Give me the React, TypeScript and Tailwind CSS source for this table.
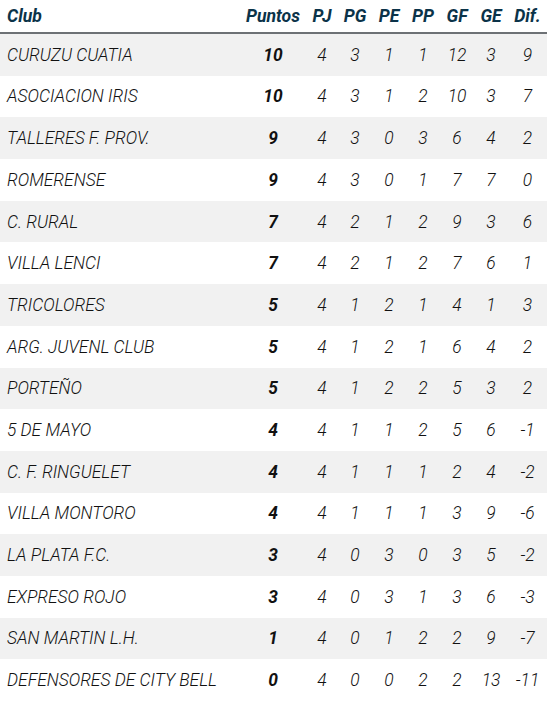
const rows: [string, number, number, number, number, number, number, number, number][] = [
  ['CURUZU CUATIA', 10, 4, 3, 1, 1, 12, 3, 9],
  ['ASOCIACION IRIS', 10, 4, 3, 1, 2, 10, 3, 7],
  ['TALLERES F. PROV.', 9, 4, 3, 0, 3, 6, 4, 2],
  ['ROMERENSE', 9, 4, 3, 0, 1, 7, 7, 0],
  ['C. RURAL', 7, 4, 2, 1, 2, 9, 3, 6],
  ['VILLA LENCI', 7, 4, 2, 1, 2, 7, 6, 1],
  ['TRICOLORES', 5, 4, 1, 2, 1, 4, 1, 3],
  ['ARG. JUVENL CLUB', 5, 4, 1, 2, 1, 6, 4, 2],
  ['PORTEÑO', 5, 4, 1, 2, 2, 5, 3, 2],
  ['5 DE MAYO', 4, 4, 1, 1, 2, 5, 6, -1],
  ['C. F. RINGUELET', 4, 4, 1, 1, 1, 2, 4, -2],
  ['VILLA MONTORO', 4, 4, 1, 1, 1, 3, 9, -6],
  ['LA PLATA F.C.', 3, 4, 0, 3, 0, 3, 5, -2],
  ['EXPRESO ROJO', 3, 4, 0, 3, 1, 3, 6, -3],
  ['SAN MARTIN L.H.', 1, 4, 0, 1, 2, 2, 9, -7],
  ['DEFENSORES DE CITY BELL', 0, 4, 0, 0, 2, 2, 13, -11],
];

const headers = ['PJ', 'PG', 'PE', 'PP', 'GF', 'GE', 'Dif.'];

const cols = 'grid grid-cols-[240px_66px_32px_34px_34px_34px_34px_34px_39px] items-center';

export default function App() {
  return (
    <div className="w-[552px] h-[711px] bg-white font-['Roboto',sans-serif] italic">
      <div className="w-[547px]">
        {/* Header */}
        <div className={`${cols} h-[34px] border-b-2 border-[#6d7175] text-[17.6px] font-bold text-[#0b3349]`}>
          <div className="pl-[7px]">Club</div>
          <div className="text-center">Puntos</div>
          {headers.map((h) => (
            <div key={h} className="text-center">{h}</div>
          ))}
        </div>

        {/* Rows */}
        {rows.map((r, i) => (
          <div
            key={r[0]}
            className={`${cols} h-[41.7px] text-[17.4px] font-light text-[#111] ${i % 2 === 0 ? 'bg-[#f1f1f1]' : 'bg-white'}`}
          >
            <div className="pl-[7px] whitespace-nowrap">{r[0]}</div>
            <div className="text-center font-bold">{r[1]}</div>
            {r.slice(2).map((v, j) => (
              <div key={j} className="text-center">{v}</div>
            ))}
          </div>
        ))}
      </div>
    </div>
  );
}
